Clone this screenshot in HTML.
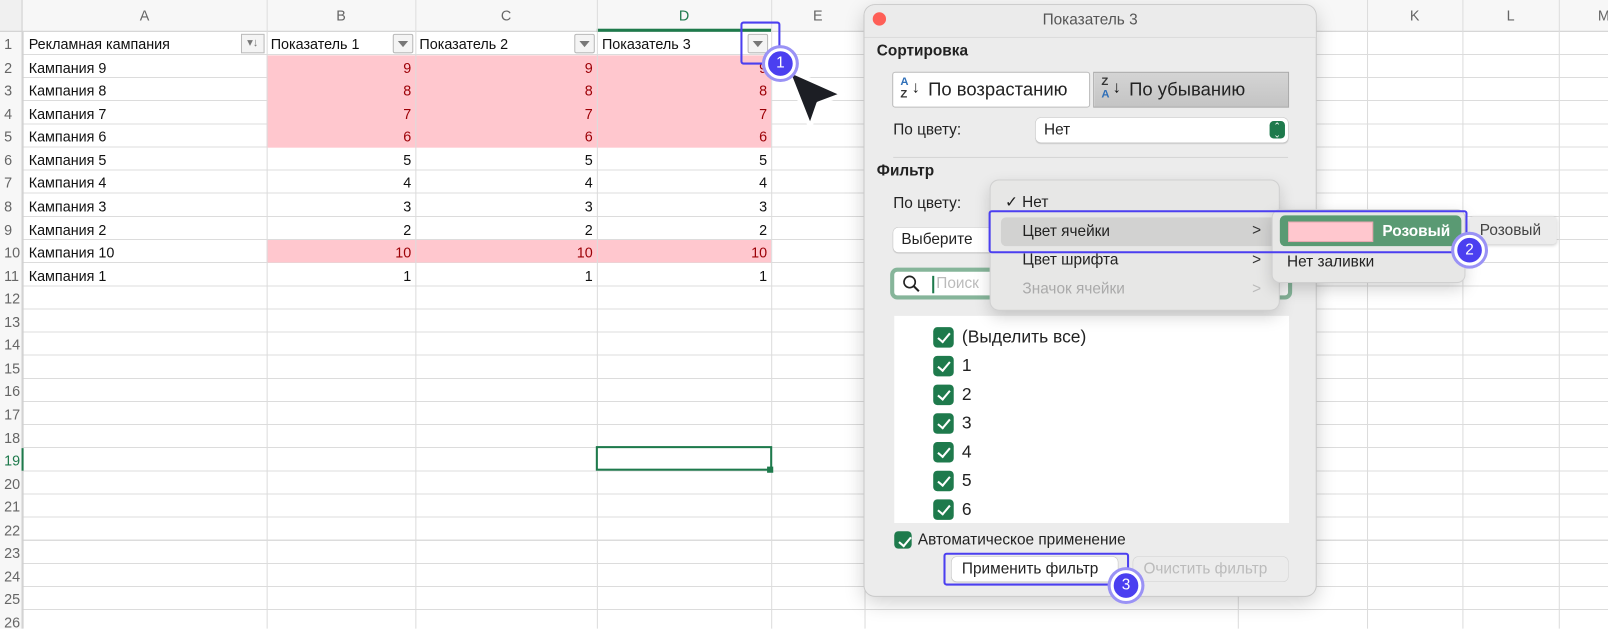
<!DOCTYPE html>
<html><head><meta charset="utf-8"><style>
*{box-sizing:border-box;margin:0;padding:0}
body{width:1608px;height:628px;overflow:hidden;background:#fff;font-family:"Liberation Sans",sans-serif;position:relative;color:#111}
#w{position:absolute;left:0;top:0;width:1568px;height:613px;transform:scale(1.02551);transform-origin:0 0;overflow:hidden}
.a{position:absolute}
.vl{position:absolute;top:0;height:628px;width:1px;background:#dcdcdc}
.hdr{position:absolute;top:0;left:0;width:1608px;height:31px;background:#f7f7f7;border-bottom:1px solid #cfcfcf}
.cl{position:absolute;top:7px;font-size:14px;color:#666;text-align:center}
.rn{position:absolute;left:4px;font-size:14px;color:#666;line-height:22px}
.t{position:absolute;font-size:14px;line-height:22px;color:#111}
.n{position:absolute;font-size:14px;line-height:22px;text-align:right}
.pk{color:#9c0006}
.fb{position:absolute;width:20px;height:19px;border:1px solid #b8b8b8;background:#f4f4f4;border-radius:2px}
.fb:after{content:"";position:absolute;left:4px;top:6px;border-left:5px solid transparent;border-right:5px solid transparent;border-top:6px solid #777}
.dlg{position:absolute;left:843px;top:5px;width:440px;height:576px;background:#ececec;border-radius:10px;box-shadow:0 0 0 1px #c9c9c9,0 6px 20px rgba(0,0,0,.2)}
.lbl{position:absolute;font-size:15px;color:#222}
.btn{position:absolute;background:#fff;border-radius:5px;box-shadow:0 0 0 .5px #c4c4c4,0 1px 1px rgba(0,0,0,.15);font-size:15px;color:#222}
.cb{position:absolute;width:20px;height:20px;background:#1e7a4c;border-radius:4px}
.cb:after{content:"";position:absolute;left:7px;top:3px;width:5px;height:10px;border:solid #fff;border-width:0 2.5px 2.5px 0;transform:rotate(40deg)}
.ci{position:absolute;font-size:17px;color:#222}
.circ{position:absolute;width:30px;height:30px;border-radius:50%;background:#4b3ff0;border:3px solid #fff;box-shadow:0 0 0 3px #9a92f5;color:#fff;font-size:15px;text-align:center;line-height:24px}
.box{position:absolute;border:2px solid #4b3ff0;border-radius:3px}
</style></head><body><div id="w">
<div class="a" style="left:0;top:31px;width:1608px;height:597px;background:repeating-linear-gradient(to bottom,transparent 0,transparent 21.56px,#dcdcdc 21.56px,#dcdcdc 22.56px)"></div>
<div class="a" style="left:260px;top:53.6px;width:492px;height:90.2px;background:#ffc7ce"></div>
<div class="a" style="left:260px;top:234px;width:492px;height:22px;background:#ffc7ce"></div>
<div class="vl" style="left:22px;background:#cfcfcf"></div>
<div class="vl" style="left:260px"></div><div class="vl" style="left:405px"></div><div class="vl" style="left:582px"></div><div class="vl" style="left:752px"></div><div class="vl" style="left:843px"></div><div class="vl" style="left:1207px"></div><div class="vl" style="left:1333px"></div><div class="vl" style="left:1426px"></div><div class="vl" style="left:1520px"></div>
<div class="a" style="left:0;top:31px;width:22px;height:597px;background:#f7f7f7;border-right:1px solid #cfcfcf"></div>
<div class="hdr"></div>
<div class="a" style="left:0;top:0;width:22px;height:31px;background:#f0f0f0;border-right:1px solid #cfcfcf;border-bottom:1px solid #cfcfcf"></div>
<div class="cl" style="left:22px;width:238px">A</div><div class="cl" style="left:260px;width:145px">B</div><div class="cl" style="left:405px;width:177px">C</div><div class="cl" style="left:582px;width:170px;color:#1e7a4c">D</div><div class="cl" style="left:752px;width:91px">E</div><div class="cl" style="left:1333px;width:93px">K</div><div class="cl" style="left:1426px;width:94px">L</div><div class="cl" style="left:1520px;width:88px">M</div>
<div class="a" style="left:582px;top:28px;width:170px;height:3px;background:#1e7a4c"></div>
<div class="a" style="left:260px;top:0;width:1px;height:31px;background:#ddd"></div><div class="a" style="left:405px;top:0;width:1px;height:31px;background:#ddd"></div><div class="a" style="left:582px;top:0;width:1px;height:31px;background:#ddd"></div><div class="a" style="left:752px;top:0;width:1px;height:31px;background:#ddd"></div><div class="a" style="left:1333px;top:0;width:1px;height:31px;background:#ddd"></div><div class="a" style="left:1426px;top:0;width:1px;height:31px;background:#ddd"></div><div class="a" style="left:1520px;top:0;width:1px;height:31px;background:#ddd"></div>
<div class="rn" style="top:32px">1</div><div class="rn" style="top:54.6px">2</div><div class="rn" style="top:77.1px">3</div><div class="rn" style="top:99.7px">4</div><div class="rn" style="top:122.2px">5</div><div class="rn" style="top:144.8px">6</div><div class="rn" style="top:167.4px">7</div><div class="rn" style="top:189.9px">8</div><div class="rn" style="top:212.5px">9</div><div class="rn" style="top:235px">10</div><div class="rn" style="top:257.6px">11</div><div class="rn" style="top:280.2px">12</div><div class="rn" style="top:302.7px">13</div><div class="rn" style="top:325.3px">14</div><div class="rn" style="top:347.8px">15</div><div class="rn" style="top:370.4px">16</div><div class="rn" style="top:393px">17</div><div class="rn" style="top:415.5px">18</div><div class="rn" style="top:438.1px;color:#1e7a4c">19</div><div class="rn" style="top:460.6px">20</div><div class="rn" style="top:483.2px">21</div><div class="rn" style="top:505.8px">22</div><div class="rn" style="top:528.3px">23</div><div class="rn" style="top:550.9px">24</div><div class="rn" style="top:573.4px">25</div><div class="rn" style="top:596px">26</div>
<div class="a" style="left:21px;top:437px;width:2px;height:22px;background:#1e7a4c"></div>
<div class="t" style="left:28px;top:32px">Рекламная кампания</div>
<div class="a" style="left:235px;top:33px;width:23px;height:19px;border:1px solid #bbb;background:#f4f4f4;font-size:11px;color:#777;text-align:center;line-height:17px">▾↓</div>
<div class="t" style="left:264px;top:32px">Показатель 1</div><div class="fb" style="left:383px;top:33px"></div>
<div class="t" style="left:409px;top:32px">Показатель 2</div><div class="fb" style="left:560px;top:33px"></div>
<div class="t" style="left:587px;top:32px">Показатель 3</div><div class="fb" style="left:729px;top:33px"></div>
<div class="t" style="left:28px;top:54.6px">Кампания 9</div><div class="t" style="left:28px;top:77.1px">Кампания 8</div><div class="t" style="left:28px;top:99.7px">Кампания 7</div><div class="t" style="left:28px;top:122.2px">Кампания 6</div><div class="t" style="left:28px;top:144.8px">Кампания 5</div><div class="t" style="left:28px;top:167.4px">Кампания 4</div><div class="t" style="left:28px;top:189.9px">Кампания 3</div><div class="t" style="left:28px;top:212.5px">Кампания 2</div><div class="t" style="left:28px;top:235px">Кампания 10</div><div class="t" style="left:28px;top:257.6px">Кампания 1</div>
<div class="n pk" style="left:300px;width:101px;top:54.6px">9</div><div class="n pk" style="left:450px;width:128px;top:54.6px">9</div><div class="n pk" style="left:620px;width:128px;top:54.6px">9</div>
<div class="n pk" style="left:300px;width:101px;top:77.1px">8</div><div class="n pk" style="left:450px;width:128px;top:77.1px">8</div><div class="n pk" style="left:620px;width:128px;top:77.1px">8</div>
<div class="n pk" style="left:300px;width:101px;top:99.7px">7</div><div class="n pk" style="left:450px;width:128px;top:99.7px">7</div><div class="n pk" style="left:620px;width:128px;top:99.7px">7</div>
<div class="n pk" style="left:300px;width:101px;top:122.2px">6</div><div class="n pk" style="left:450px;width:128px;top:122.2px">6</div><div class="n pk" style="left:620px;width:128px;top:122.2px">6</div>
<div class="n" style="left:300px;width:101px;top:144.8px">5</div><div class="n" style="left:450px;width:128px;top:144.8px">5</div><div class="n" style="left:620px;width:128px;top:144.8px">5</div>
<div class="n" style="left:300px;width:101px;top:167.4px">4</div><div class="n" style="left:450px;width:128px;top:167.4px">4</div><div class="n" style="left:620px;width:128px;top:167.4px">4</div>
<div class="n" style="left:300px;width:101px;top:189.9px">3</div><div class="n" style="left:450px;width:128px;top:189.9px">3</div><div class="n" style="left:620px;width:128px;top:189.9px">3</div>
<div class="n" style="left:300px;width:101px;top:212.5px">2</div><div class="n" style="left:450px;width:128px;top:212.5px">2</div><div class="n" style="left:620px;width:128px;top:212.5px">2</div>
<div class="n pk" style="left:300px;width:101px;top:235px">10</div><div class="n pk" style="left:450px;width:128px;top:235px">10</div><div class="n pk" style="left:620px;width:128px;top:235px">10</div>
<div class="n" style="left:300px;width:101px;top:257.6px">1</div><div class="n" style="left:450px;width:128px;top:257.6px">1</div><div class="n" style="left:620px;width:128px;top:257.6px">1</div>
<div class="a" style="left:581px;top:435px;width:172px;height:24px;border:2px solid #1e7a4c"></div>
<div class="a" style="left:748px;top:455px;width:6px;height:6px;background:#1e7a4c"></div>

<div class="dlg">
 <div class="a" style="left:0;top:0;width:440px;height:32px;border-bottom:1px solid #dcdcdc;border-radius:10px 10px 0 0;background:#ebebeb"></div>
 <div class="a" style="left:8px;top:7px;width:13px;height:13px;border-radius:50%;background:#fe5f57"></div>
 <div class="a" style="left:0;top:6px;width:440px;text-align:center;font-size:15px;color:#555">Показатель 3</div>
 <div class="lbl" style="left:12px;top:36px;font-weight:bold">Сортировка</div>
 <div class="btn" style="left:28px;top:66px;width:191px;height:33px;border-radius:2px;box-shadow:0 0 0 1px #bbb">
  <span class="a" style="left:7px;top:3px;font-size:11px;line-height:12px;color:#2f6fb8;font-weight:bold">A<br><span style="color:#333">Z</span></span><span class="a" style="left:18px;top:6px;font-size:16px;font-weight:bold">↓</span><span class="a" style="left:34px;top:6px;font-size:18px">По возрастанию</span></div>
 <div class="a" style="left:224px;top:66px;width:189px;height:33px;background:linear-gradient(#d4d4d4,#c4c4c4);box-shadow:0 0 0 1px #aaa">
  <span class="a" style="left:7px;top:3px;font-size:11px;line-height:12px;color:#333;font-weight:bold">Z<br><span style="color:#2f6fb8">A</span></span><span class="a" style="left:18px;top:6px;font-size:16px;font-weight:bold">↓</span><span class="a" style="left:34px;top:6px;font-size:18px;color:#222">По убыванию</span></div>
 <div class="lbl" style="left:28px;top:113px">По цвету:</div>
 <div class="btn" style="left:167px;top:110px;width:246px;height:24px"><span class="a" style="left:8px;top:3px">Нет</span><span class="a" style="left:228px;top:3px;width:15px;height:17px;background:#1e7a4c;border-radius:4px;color:#fff;font-size:9px;line-height:8px;text-align:center;padding-top:1px">⌃<br>⌄</span></div>
 <div class="a" style="left:28px;top:148px;width:385px;height:1px;background:#d4d4d4"></div>
 <div class="lbl" style="left:12px;top:153px;font-weight:bold">Фильтр</div>
 <div class="lbl" style="left:28px;top:185px">По цвету:</div>
 <div class="btn" style="left:28px;top:217px;width:100px;height:24px"><span class="a" style="left:8px;top:3px">Выберите</span></div>
 <div class="a" style="left:25px;top:256px;width:392px;height:31px;border:4px solid #86b59a;border-radius:7px;background:#fff">
  <svg class="a" style="left:8px;top:3px" width="18" height="18"><circle cx="7" cy="7" r="5.5" fill="none" stroke="#222" stroke-width="1.6"/><path d="M11 11 L16 16" stroke="#222" stroke-width="2"/></svg>
  <div class="a" style="left:37px;top:4px;width:2px;height:17px;background:#1e7a4c"></div><span class="a" style="left:41px;top:3px;font-size:15px;color:#bbb">Поиск</span></div>
 <div class="a" style="left:29px;top:303px;width:385px;height:202px;background:#fff"></div>
 <div class="cb" style="left:67px;top:314px"></div><div class="ci" style="left:95px;top:314px">(Выделить все)</div>
 <div class="cb" style="left:67px;top:342px"></div><div class="ci" style="left:95px;top:342px">1</div>
 <div class="cb" style="left:67px;top:370px"></div><div class="ci" style="left:95px;top:370px">2</div>
 <div class="cb" style="left:67px;top:398px"></div><div class="ci" style="left:95px;top:398px">3</div>
 <div class="cb" style="left:67px;top:426px"></div><div class="ci" style="left:95px;top:426px">4</div>
 <div class="cb" style="left:67px;top:454px"></div><div class="ci" style="left:95px;top:454px">5</div>
 <div class="cb" style="left:67px;top:482px"></div><div class="ci" style="left:95px;top:482px">6</div>
 <div class="cb" style="left:29px;top:513px;width:17px;height:17px"></div><div class="lbl" style="left:52px;top:513px">Автоматическое применение</div>
 <div class="btn" style="left:85px;top:538px;width:162px;height:24px"><span class="a" style="left:10px;top:3px">Применить фильтр</span></div>
 <div class="a" style="left:262px;top:538px;width:151px;height:24px;border-radius:5px;box-shadow:0 0 0 .5px #d0d0d0;font-size:15px;color:#bbb"><span class="a" style="left:10px;top:3px">Очистить фильтр</span></div>
</div>

<div class="a" style="left:966px;top:176px;width:281px;height:126px;background:#e7e7e6;border-radius:8px;box-shadow:0 0 0 1px #d0d0d0,0 6px 16px rgba(0,0,0,.18)"></div>
<div class="a" style="left:980px;top:188px;font-size:15px;color:#222">✓ Нет</div>
<div class="a" style="left:976px;top:212px;width:270px;height:28px;background:#d2d2d1;border-radius:5px"></div>
<div class="a" style="left:997px;top:217px;font-size:15px;color:#222">Цвет ячейки</div><div class="a" style="left:1221px;top:216px;font-size:15px;color:#333">&gt;</div>
<div class="a" style="left:997px;top:245px;font-size:15px;color:#222">Цвет шрифта</div><div class="a" style="left:1221px;top:245px;font-size:15px;color:#333">&gt;</div>
<div class="a" style="left:997px;top:273px;font-size:15px;color:#aaa">Значок ячейки</div><div class="a" style="left:1221px;top:273px;font-size:15px;color:#bbb">&gt;</div>
<div class="a" style="left:1241px;top:205px;width:187px;height:70px;background:#e7e7e6;border-radius:7px;box-shadow:0 0 0 1px #d0d0d0,0 6px 16px rgba(0,0,0,.18)"></div>
<div class="a" style="left:1248px;top:210px;width:177px;height:30px;background:#5a9a73;border-radius:5px"></div>
<div class="a" style="left:1256px;top:216px;width:83px;height:20px;background:#ffc7ce;border:1px solid #e8a8b0"></div>
<div class="a" style="left:1348px;top:217px;font-size:15px;color:#fff;font-weight:bold">Розовый</div>
<div class="a" style="left:1255px;top:247px;font-size:15px;color:#222">Нет заливки</div>
<div class="a" style="left:1433px;top:211px;width:85px;height:27px;background:#ebebeb;border-radius:4px;box-shadow:0 1px 3px rgba(0,0,0,.2);font-size:15px;color:#444;padding:5px 0 0 10px">Розовый</div>

<div class="box" style="left:722px;top:21px;width:39px;height:42px"></div>
<div class="box" style="left:964px;top:205px;width:467px;height:42px"></div>
<div class="box" style="left:920px;top:539px;width:181px;height:32px"></div>
<svg class="a" style="left:0;top:0" width="1608" height="628"><path d="M768 68 L822 92 L798 101 L790 124 Z" fill="#1c1e24" stroke="#fff" stroke-width="4" stroke-linejoin="round"/></svg>
<div class="circ" style="left:746px;top:47px">1</div>
<div class="circ" style="left:1418px;top:229px">2</div>
<div class="circ" style="left:1083px;top:556px">3</div>
</div></body></html>
